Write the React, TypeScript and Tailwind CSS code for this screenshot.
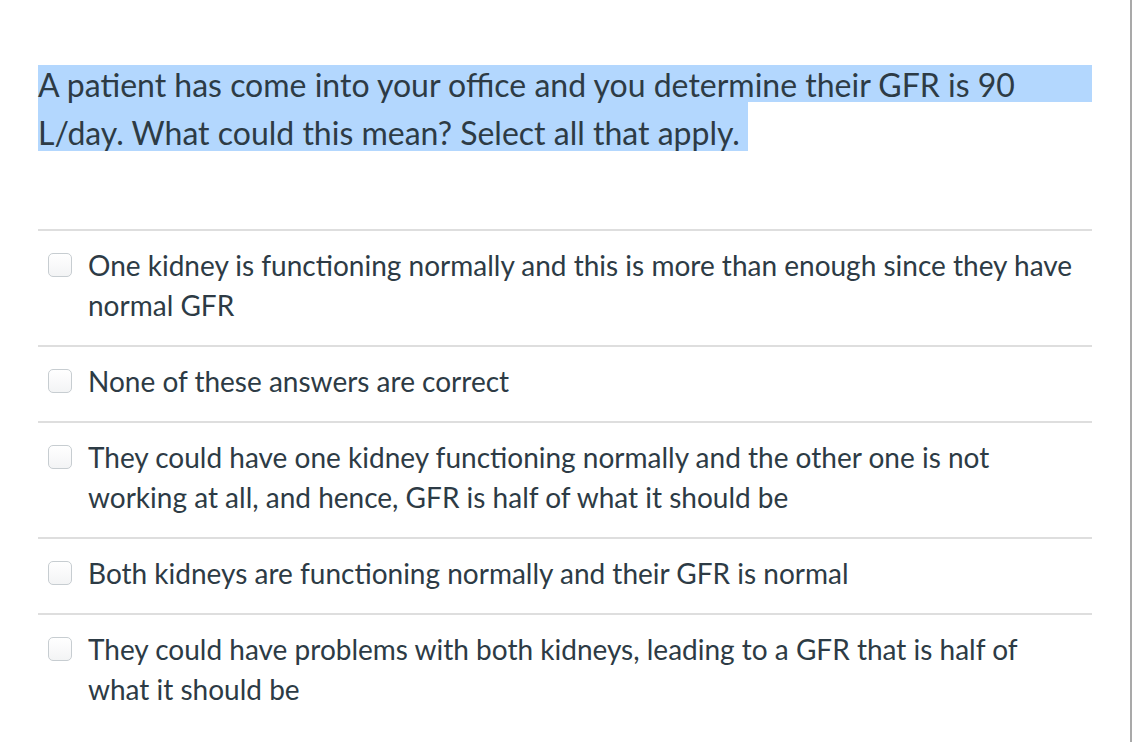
const options = [
  "One kidney is functioning normally and this is more than enough since they have normal GFR",
  "None of these answers are correct",
  "They could have one kidney functioning normally and the other one is not working at all, and hence, GFR is half of what it should be",
  "Both kidneys are functioning normally and their GFR is normal",
  "They could have problems with both kidneys, leading to a GFR that is half of what it should be",
];

const Checkbox = () => (
  <span className="mt-[8px] block h-6 w-6 shrink-0 rounded-[5px] border border-[#c7cdd1] bg-gradient-to-b from-white to-[#f3f4f5]" />
);

export default function App() {
  return (
    <div className="flex h-[742px] w-[1138px] bg-white font-['Lato',sans-serif] text-[#2d3b45]">
      <main className="w-[1132px] border-r-2 border-[#a9a9a9] pl-[38px] pr-[38px] pt-[65px]">
        <div className="text-[32px]">
          <div className="h-[37px] bg-[#b3d7fe] pt-[1px] leading-[37px]">
            A patient has come into your office and you determine their GFR is 90
          </div>
          <div className="h-[49px] w-fit bg-[#b3d7fe] pr-[8px] pt-[12px] leading-[37px]">
            L/day. What could this mean? Select all that apply.
          </div>
        </div>

        <ul className="mt-[78px]">
          {options.map((text) => (
            <li
              key={text}
              className="flex gap-[16px] border-t-2 border-[#dedede] pb-[20px] pl-[10px] pt-[14px] text-[28px] leading-[40px]"
            >
              <Checkbox />
              <span className="pr-[12px]">{text}</span>
            </li>
          ))}
        </ul>
      </main>
    </div>
  );
}
